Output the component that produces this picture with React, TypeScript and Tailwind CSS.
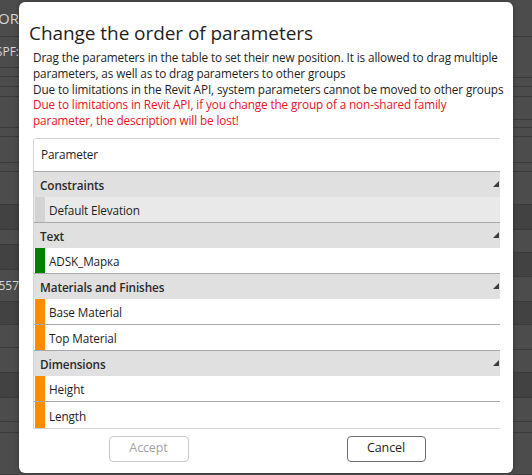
import React from 'react';

type Row = { h: number; bg?: string; text?: string };

// background app rows (only the edges are visible behind the dialog)
const leftRows: Row[] = [
  { h: 37, text: 'OR' },
  { h: 31, text: 'SPF:' },
  { h: 9 },
  { h: 10 },
  { h: 10 },
  { h: 31 },
  { h: 9 },
  { h: 26 },
  { h: 9 },
  { h: 33 },
  { h: 25, bg: 'dark' },
  { h: 15 },
  { h: 25, bg: 'dark' },
  { h: 32, text: '557' },
  { h: 23, bg: 'dark' },
  { h: 23 },
  { h: 25 },
  { h: 25, bg: 'dark' },
  { h: 24 },
  { h: 11 },
  { h: 42 },
];

const rightRows: Row[] = [
  { h: 37 },
  { h: 41 },
  { h: 9 },
  { h: 10 },
  { h: 23 },
  { h: 8 },
  { h: 9 },
  { h: 26 },
  { h: 9 },
  { h: 33 },
  { h: 25, bg: 'dark' },
  { h: 23 },
  { h: 24, bg: 'dark' },
  { h: 25 },
  { h: 23, bg: 'dark' },
  { h: 25 },
  { h: 23 },
  { h: 25, bg: 'dark' },
  { h: 24 },
  { h: 11 },
  { h: 42 },
];

type Param = { name: string; color: string; selected?: boolean };
type Group = { name: string; items: Param[] };

const groups: Group[] = [
  { name: 'Constraints', items: [{ name: 'Default Elevation', color: '#d3d3d3', selected: true }] },
  { name: 'Text', items: [{ name: 'ADSK_Марка', color: '#008000' }] },
  {
    name: 'Materials and Finishes',
    items: [
      { name: 'Base Material', color: '#ff8c00' },
      { name: 'Top Material', color: '#ff8c00' },
    ],
  },
  {
    name: 'Dimensions',
    items: [
      { name: 'Height', color: '#ff8c00' },
      { name: 'Length', color: '#ff8c00' },
    ],
  },
];

function BgColumn({ rows, side }: { rows: Row[]; side: 'left' | 'right' }) {
  return (
    <div className="flex w-[19px] flex-col overflow-hidden">
      {rows.map((r, i) => (
        <div
          key={i}
          className={`flex shrink-0 items-center border-b border-[#3b3b3b] ${r.bg === 'dark' ? 'bg-[#424242]' : 'bg-[#4c4c4c]'} ${side === 'left' ? 'justify-end' : ''}`}
          style={{ height: r.h }}
        >
          {r.text && (
            <span className={`whitespace-nowrap text-[#d6d6d6] ${r.text === 'OR' ? 'text-[15px]' : 'text-[12px]'}`}>{r.text}</span>
          )}
        </div>
      ))}
    </div>
  );
}

function Caret() {
  return (
    <svg width="6" height="6" viewBox="0 0 6 6" className="shrink-0">
      <polygon points="6,0 6,6 0,6" fill="#3c3c3c" />
    </svg>
  );
}

export default function App() {
  return (
    <div
      className="relative h-[475px] w-[532px] overflow-hidden bg-[#4c4c4c]"
      style={{ fontFamily: '"Open Sans", "Noto Sans", sans-serif' }}
    >
      {/* app behind the modal */}
      <div className="flex h-full">
        <BgColumn rows={leftRows} side="left" />
        <div className="flex-1" />
        <BgColumn rows={rightRows} side="right" />
      </div>

      {/* dialog */}
      <div className="absolute left-[19px] top-[2px] flex h-[471px] w-[494px] flex-col rounded-[6px] bg-white pl-[14px] pr-[13px] pt-[18px] tracking-[-0.12px] shadow-[0_0_4px_rgba(0,0,0,0.35)]">
        <h1 className="ml-[-4px] whitespace-nowrap text-[19px] leading-[26px] tracking-[-0.06px] text-[#1f1f1f]">
          Change the order of parameters
        </h1>

        <div className="mt-[4px] text-[11.75px] leading-[15.75px] text-[#1e1e1e]">
          <p className="whitespace-nowrap">
            Drag the parameters in the table to set their new position. It is allowed to drag multiple
          </p>
          <p className="whitespace-nowrap">parameters, as well as to drag parameters to other groups</p>
          <p className="whitespace-nowrap">
            Due to limitations in the Revit API, system parameters cannot be moved to other groups
          </p>
          <p className="whitespace-nowrap text-[#e8141e]">
            Due to limitations in Revit API, if you change the group of a non-shared family
          </p>
          <p className="whitespace-nowrap text-[#e8141e]">parameter, the description will be lost!</p>
        </div>

        {/* table */}
        <div className="mt-[9px] overflow-hidden rounded-tl-[4px] border-b border-l border-t border-[#d4d4d4] text-[11.75px] text-[#1e1e1e]">
          <div className="flex h-[33px] items-center border-b border-[#a9a9a9] bg-white pl-[7px] pt-[1px]">Parameter</div>
          {groups.map((g) => (
            <div key={g.name}>
              <div className="flex h-[25px] items-center justify-between bg-[#e0e0e0] pl-[6px] pr-[1px] font-semibold text-[#2a2a2a]">
                <span className="pt-[4px]">{g.name}</span>
                <Caret />
              </div>
              {g.items.map((p, i) => (
                <div
                  key={p.name}
                  className={`flex h-[26px] items-stretch pl-[1px] ${i === g.items.length - 1 && g.name === 'Dimensions' ? '' : 'border-b border-[#a9a9a9]'} ${p.selected ? 'bg-[#e9e9e9]' : 'bg-white'}`}
                >
                  <div className="w-[10px] shrink-0" style={{ backgroundColor: p.color }} />
                  <span className="flex items-center pl-[4px] pt-[4px]">{p.name}</span>
                </div>
              ))}
            </div>
          ))}
        </div>

        {/* buttons */}
        <div className="mt-[7px] flex justify-center gap-[158px] pl-[1px]">
          <button className="h-[26px] w-[80px] rounded-[4px] border border-[#c9c9c9] bg-white text-[12.5px] text-[#a3a3a3]">
            Accept
          </button>
          <button className="h-[26px] w-[79px] rounded-[4px] border border-[#6e6e6e] bg-white text-[12.5px] text-[#1e1e1e]">
            Cancel
          </button>
        </div>
      </div>
    </div>
  );
}
